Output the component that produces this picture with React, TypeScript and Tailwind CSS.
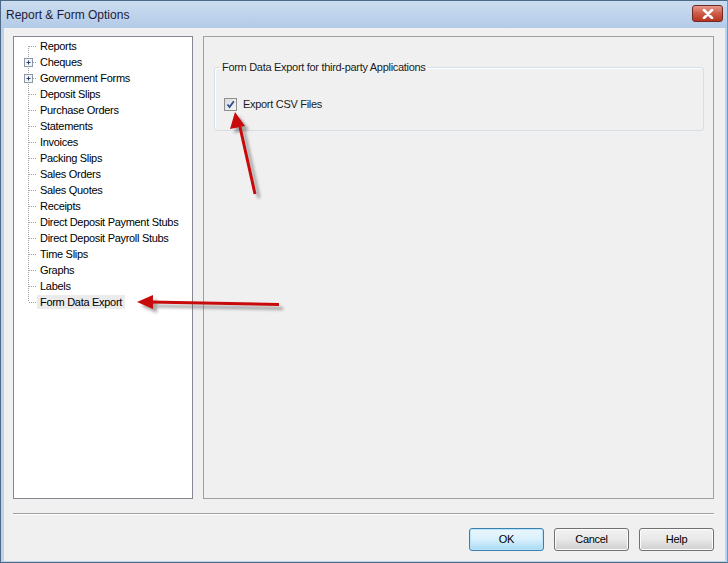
import React from 'react';

const items = [
  { label: 'Reports' },
  { label: 'Cheques', plus: true },
  { label: 'Government Forms', plus: true },
  { label: 'Deposit Slips' },
  { label: 'Purchase Orders' },
  { label: 'Statements' },
  { label: 'Invoices' },
  { label: 'Packing Slips' },
  { label: 'Sales Orders' },
  { label: 'Sales Quotes' },
  { label: 'Receipts' },
  { label: 'Direct Deposit Payment Stubs' },
  { label: 'Direct Deposit Payroll Stubs' },
  { label: 'Time Slips' },
  { label: 'Graphs' },
  { label: 'Labels' },
  { label: 'Form Data Export', selected: true },
];

const font = { fontFamily: '"Liberation Sans", Arial, sans-serif' };

function TreeLines({ first, last, plus }: { first: boolean; last: boolean; plus?: boolean }) {
  return (
    <svg width="23" height="16" className="shrink-0">
      <line
        x1="14.5"
        x2="14.5"
        y1={first ? 8 : 0}
        y2={last ? 8 : 16}
        stroke="#a0a0a0"
        strokeDasharray="1 1"
      />
      <line x1="15" x2="23" y1="8.5" y2="8.5" stroke="#a0a0a0" strokeDasharray="1 1" />
      {plus && (
        <g>
          <rect x="10.5" y="4.5" width="8" height="8" fill="#f4f4f4" stroke="#8d9aa6" />
          <line x1="12.5" x2="16.5" y1="8.5" y2="8.5" stroke="#23407a" />
          <line x1="14.5" x2="14.5" y1="6.5" y2="10.5" stroke="#23407a" />
        </g>
      )}
    </svg>
  );
}

function Tree() {
  return (
    <div className="w-[180px] shrink-0 bg-white border border-[#828790] pt-[1px]">
      {items.map((it, i) => (
        <div key={it.label} className="flex items-center h-[16px]">
          <TreeLines first={i === 0} last={i === items.length - 1} plus={it.plus} />
          <span
            className={
              'px-[3px] leading-[14px] text-[11px] tracking-[-0.3px] text-black whitespace-nowrap ' +
              (it.selected ? 'bg-[#ebebeb]' : '')
            }
          >
            {it.label}
          </span>
        </div>
      ))}
    </div>
  );
}

function WinButton({ label, primary }: { label: string; primary?: boolean }) {
  return (
    <button
      className={
        'w-[75px] h-[23px] rounded-[3px] border text-[11px] tracking-[-0.3px] text-black flex items-center justify-center ' +
        (primary
          ? 'border-[#3c7fb1] bg-gradient-to-b from-[#eaf6fd] via-[#d9f0fc] to-[#a7d9f5] shadow-[inset_0_0_0_1px_#b9e4f8]'
          : 'border-[#707070] bg-gradient-to-b from-[#f2f2f2] via-[#e8e8e8] to-[#cfcfcf] shadow-[inset_0_0_0_1px_#fcfcfc]')
      }
    >
      {label}
    </button>
  );
}

function Arrows() {
  return (
    <svg className="absolute inset-0 pointer-events-none" width="728" height="563">
      <defs>
        <filter id="sh" x="-20%" y="-20%" width="140%" height="140%">
          <feGaussianBlur stdDeviation="1.6" />
        </filter>
      </defs>
      <g transform="translate(4 4)" opacity="0.45" filter="url(#sh)" fill="#404040" stroke="#404040">
        <line x1="150" y1="302" x2="279" y2="304.5" strokeWidth="3" />
        <polygon points="137,302 153,295 153,309" stroke="none" />
        <line x1="240" y1="127" x2="255" y2="194" strokeWidth="3" />
        <polygon points="235,112 230,129 245,126" stroke="none" />
      </g>
      <g fill="#c80a0a" stroke="#c80a0a">
        <line x1="150" y1="302" x2="279" y2="304.5" strokeWidth="3" />
        <polygon points="137,302 153,295 153,309" stroke="none" />
        <line x1="240" y1="127" x2="255" y2="194" strokeWidth="3" />
        <polygon points="235,112 230,129 245,126" stroke="none" />
      </g>
    </svg>
  );
}

export default function App() {
  return (
    <div className="relative w-[728px] h-[563px] overflow-hidden" style={font}>
      <div className="flex flex-col w-full h-full bg-[#bdd3ec] border border-[#4d6a86] border-r-[#2fb3e8]">
        {/* title bar */}
        <div className="h-[27px] shrink-0 flex items-center justify-between pl-[5px] pr-[4px] bg-gradient-to-b from-[#cadcf0] to-[#b4cbe7]">
          <span className="text-[12px] text-[#1c1c3a]">Report &amp; Form Options</span>
          <div className="w-[31px] h-[17px] rounded-[3px] border border-[#6e2b24] bg-gradient-to-b from-[#e59a8c] via-[#cc5a47] to-[#b8321f] flex items-center justify-center mt-[-2px]">
            <svg width="12" height="10" viewBox="0 0 12 10">
              <path d="M2 1 L10 9 M10 1 L2 9" stroke="#ffffff" strokeWidth="2.6" strokeLinecap="round" />
            </svg>
          </div>
        </div>
        {/* client area */}
        <div className="flex-1 flex flex-col ml-[3px] mr-[2px] mb-[1px] bg-[#f0f0f0] pt-[8px] pl-[9px] pr-[11px]">
          <div className="flex gap-[10px] h-[463px]">
            <Tree />
            <div className="flex-1 border border-[#a0a0a0] pt-[24px] pl-[10px] pr-[9px]">
              <fieldset className="border border-[#d5dfe5] rounded-[3px] pt-[23px] pb-[19px] shadow-[inset_1px_1px_0_#ffffff]">
                <legend className="ml-[5px] px-[2px] text-[11px] tracking-[-0.3px] leading-[13px] text-[#1b1b1b]">
                  Form Data Export for third-party Applications
                </legend>
                <div className="flex items-center gap-[6px] h-[13px] pl-[9px] mt-[1px]">
                  <div className="w-[13px] h-[13px] border border-[#8e8f8f] bg-gradient-to-br from-[#dcdcdc] to-[#f6f6f6] flex items-center justify-center">
                    <svg width="9" height="9" viewBox="0 0 9 9">
                      <path d="M1.5 4.5 L3.6 7 L7.8 1.2" fill="none" stroke="#2b4e8f" strokeWidth="1.8" />
                    </svg>
                  </div>
                  <span className="text-[11px] tracking-[-0.3px] text-[#1b1b1b]">Export CSV Files</span>
                </div>
              </fieldset>
            </div>
          </div>
          <div className="mt-[14px] h-[2px] border-t border-[#a0a0a0] border-b border-b-white" />
          <div className="mt-[13px] flex justify-end gap-[10px]">
            <WinButton label="OK" primary />
            <WinButton label="Cancel" />
            <WinButton label="Help" />
          </div>
        </div>
      </div>
      <Arrows />
    </div>
  );
}
